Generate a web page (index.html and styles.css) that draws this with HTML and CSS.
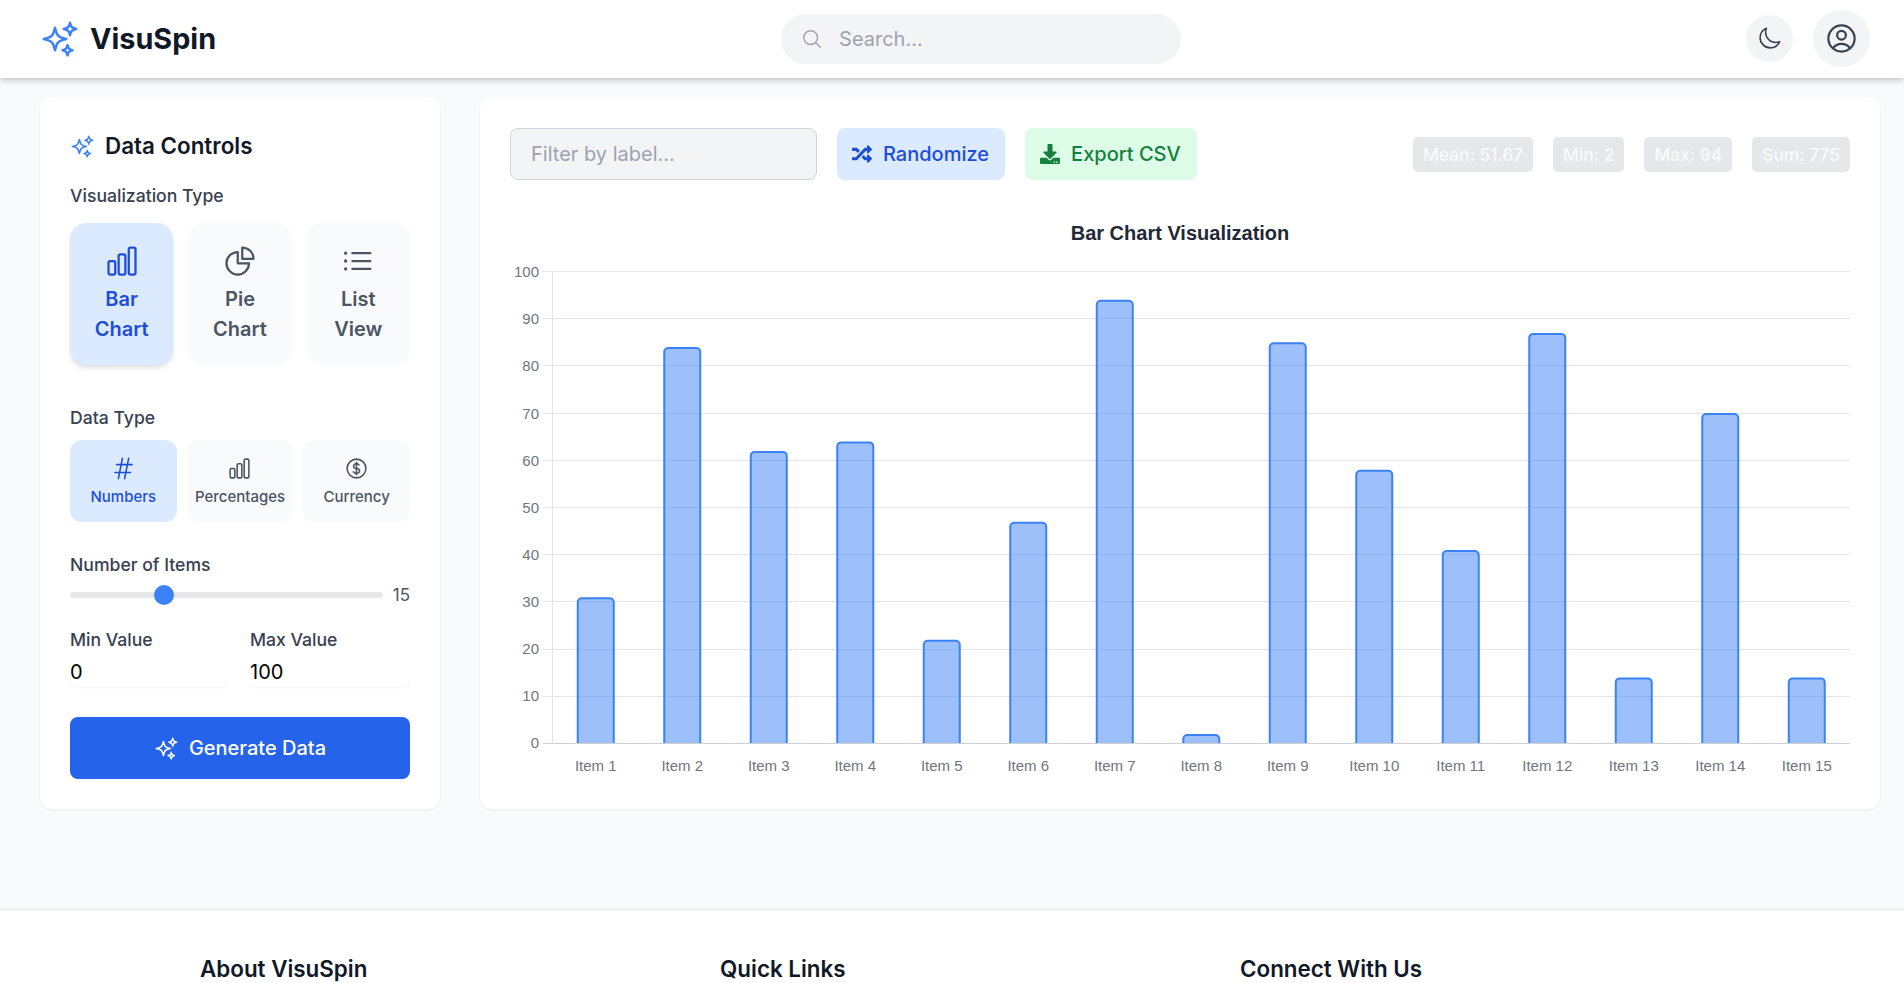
FILE: index.html
```html
<!DOCTYPE html>
<html lang="en">
<head>
  <meta charset="UTF-8">
  <meta name="viewport" content="width=device-width, initial-scale=1.0">
  <title>VisuSpin</title>
  <link rel="stylesheet" href="styles.css">
</head>
<body>
  <header class="site-header">
    <div class="brand">
      <svg class="icon brand-icon" viewBox="0 0 24 24"><path d="M9.813 15.904 9 18.75l-.813-2.846a4.5 4.5 0 0 0-3.09-3.09L2.25 12l2.846-.813a4.5 4.5 0 0 0 3.09-3.09L9 5.25l.813 2.846a4.5 4.5 0 0 0 3.09 3.09L15.75 12l-2.846.813a4.5 4.5 0 0 0-3.09 3.09ZM18.259 8.715 18 9.75l-.259-1.035a3.375 3.375 0 0 0-2.455-2.456L14.25 6l1.036-.259a3.375 3.375 0 0 0 2.455-2.456L18 2.25l.259 1.035a3.375 3.375 0 0 0 2.456 2.456L21.75 6l-1.035.259a3.375 3.375 0 0 0-2.456 2.456ZM16.894 20.567 16.5 21.75l-.394-1.183a2.25 2.25 0 0 0-1.423-1.423L13.5 18.75l1.183-.394a2.25 2.25 0 0 0 1.423-1.423l.394-1.183.394 1.183a2.25 2.25 0 0 0 1.423 1.423l1.183.394-1.183.394a2.25 2.25 0 0 0-1.423 1.423Z"/></svg>
      <span class="brand-name">VisuSpin</span>
    </div>
    <label class="search">
      <svg class="icon search-icon" viewBox="0 0 24 24"><path d="m21 21-5.197-5.197m0 0A7.5 7.5 0 1 0 5.196 5.196a7.5 7.5 0 0 0 10.607 10.607Z"/></svg>
      <input type="text" placeholder="Search...">
    </label>
    <div class="header-actions">
      <button class="round-btn" type="button">
        <svg class="icon moon-icon" viewBox="0 0 24 24"><path d="M21.752 15.002A9.72 9.72 0 0 1 18 15.75c-5.385 0-9.75-4.365-9.75-9.75 0-1.33.266-2.597.748-3.752A9.753 9.753 0 0 0 3 11.25C3 16.635 7.365 21 12.75 21a9.753 9.753 0 0 0 9.002-5.998Z"/></svg>
      </button>
      <button class="round-btn" type="button">
        <svg class="icon user-icon" viewBox="0 0 24 24"><path d="M17.982 18.725A7.488 7.488 0 0 0 12 15.75a7.488 7.488 0 0 0-5.982 2.975m11.963 0a9 9 0 1 0-11.963 0m11.963 0A8.966 8.966 0 0 1 12 21a8.966 8.966 0 0 1-5.982-2.275M15 9.75a3 3 0 1 1-6 0 3 3 0 0 1 6 0Z"/></svg>
      </button>
    </div>
  </header>

  <main class="dashboard">
    <aside class="card controls">
      <h2 class="controls-title">
        <svg class="icon title-icon" viewBox="0 0 24 24"><path d="M9.813 15.904 9 18.75l-.813-2.846a4.5 4.5 0 0 0-3.09-3.09L2.25 12l2.846-.813a4.5 4.5 0 0 0 3.09-3.09L9 5.25l.813 2.846a4.5 4.5 0 0 0 3.09 3.09L15.75 12l-2.846.813a4.5 4.5 0 0 0-3.09 3.09ZM18.259 8.715 18 9.75l-.259-1.035a3.375 3.375 0 0 0-2.455-2.456L14.25 6l1.036-.259a3.375 3.375 0 0 0 2.455-2.456L18 2.25l.259 1.035a3.375 3.375 0 0 0 2.456 2.456L21.75 6l-1.035.259a3.375 3.375 0 0 0-2.456 2.456ZM16.894 20.567 16.5 21.75l-.394-1.183a2.25 2.25 0 0 0-1.423-1.423L13.5 18.75l1.183-.394a2.25 2.25 0 0 0 1.423-1.423l.394-1.183.394 1.183a2.25 2.25 0 0 0 1.423 1.423l1.183.394-1.183.394a2.25 2.25 0 0 0-1.423 1.423Z"/></svg>
        Data Controls
      </h2>

      <div class="field-label viz-label">Visualization Type</div>
      <div class="viz-options">
        <button class="viz-btn active" type="button">
          <svg class="icon" viewBox="0 0 24 24"><path d="M3 13.125C3 12.504 3.504 12 4.125 12h2.25c.621 0 1.125.504 1.125 1.125v6.75C7.5 20.496 6.996 21 6.375 21h-2.25A1.125 1.125 0 0 1 3 19.875v-6.75ZM9.750 8.625c0-.621.504-1.125 1.125-1.125h2.25c.621 0 1.125.504 1.125 1.125v11.25c0 .621-.504 1.125-1.125 1.125h-2.25a1.125 1.125 0 0 1-1.125-1.125V8.625ZM16.5 4.125c0-.621.504-1.125 1.125-1.125h2.25C20.496 3 21 3.504 21 4.125v15.75c0 .621-.504 1.125-1.125 1.125h-2.25a1.125 1.125 0 0 1-1.125-1.125V4.125Z"/></svg>
          <span>Bar Chart</span>
        </button>
        <button class="viz-btn" type="button">
          <svg class="icon" viewBox="0 0 24 24"><path d="M10.5 6a7.5 7.5 0 1 0 7.5 7.5h-7.5V6Z"/><path d="M13.5 10.5H21A7.5 7.5 0 0 0 13.5 3v7.5Z"/></svg>
          <span>Pie Chart</span>
        </button>
        <button class="viz-btn" type="button">
          <svg class="icon" viewBox="0 0 24 24"><path d="M8.25 6.75h12M8.25 12h12m-12 5.25h12M3.75 6.75h.007v.008H3.75V6.75Zm.375 0a.375.375 0 1 1-.75 0 .375.375 0 0 1 .75 0ZM3.75 12h.007v.008H3.75V12Zm.375 0a.375.375 0 1 1-.75 0 .375.375 0 0 1 .75 0Zm-.375 5.25h.007v.008H3.75v-.008Zm.375 0a.375.375 0 1 1-.75 0 .375.375 0 0 1 .75 0Z"/></svg>
          <span>List View</span>
        </button>
      </div>

      <div class="field-label type-label">Data Type</div>
      <div class="type-options">
        <button class="type-btn active" type="button">
          <svg class="icon" viewBox="0 0 24 24"><path d="M5.25 8.25h15m-16.5 7.5h15m-1.8-13.5-3.9 19.5m-2.1-19.5-3.9 19.5"/></svg>
          <span>Numbers</span>
        </button>
        <button class="type-btn" type="button">
          <svg class="icon" viewBox="0 0 24 24"><path d="M3 13.125C3 12.504 3.504 12 4.125 12h2.25c.621 0 1.125.504 1.125 1.125v6.75C7.5 20.496 6.996 21 6.375 21h-2.25A1.125 1.125 0 0 1 3 19.875v-6.75ZM9.750 8.625c0-.621.504-1.125 1.125-1.125h2.25c.621 0 1.125.504 1.125 1.125v11.25c0 .621-.504 1.125-1.125 1.125h-2.25a1.125 1.125 0 0 1-1.125-1.125V8.625ZM16.5 4.125c0-.621.504-1.125 1.125-1.125h2.25C20.496 3 21 3.504 21 4.125v15.75c0 .621-.504 1.125-1.125 1.125h-2.25a1.125 1.125 0 0 1-1.125-1.125V4.125Z"/></svg>
          <span>Percentages</span>
        </button>
        <button class="type-btn" type="button">
          <svg class="icon" viewBox="0 0 24 24"><path d="M12 6v12m-3-2.818.879.659c1.171.879 3.07.879 4.242 0 1.172-.879 1.172-2.303 0-3.182C13.536 12.219 12.768 12 12 12c-.725 0-1.45-.22-2.003-.659-1.106-.879-1.106-2.303 0-3.182s2.9-.879 4.006 0l.415.33M21 12a9 9 0 1 1-18 0 9 9 0 0 1 18 0Z"/></svg>
          <span>Currency</span>
        </button>
      </div>

      <div class="field-label items-label">Number of Items</div>
      <div class="slider-row">
        <input class="slider" type="range" min="5" max="40" value="15">
        <span class="slider-value">15</span>
      </div>

      <div class="range-fields">
        <div class="range-field">
          <label class="field-label" for="minValue">Min Value</label>
          <input id="minValue" type="number" value="0">
        </div>
        <div class="range-field">
          <label class="field-label" for="maxValue">Max Value</label>
          <input id="maxValue" type="number" value="100">
        </div>
      </div>

      <button class="generate-btn" type="button">
        <svg class="icon" viewBox="0 0 24 24"><path d="M9.813 15.904 9 18.75l-.813-2.846a4.5 4.5 0 0 0-3.09-3.09L2.25 12l2.846-.813a4.5 4.5 0 0 0 3.09-3.09L9 5.25l.813 2.846a4.5 4.5 0 0 0 3.09 3.09L15.75 12l-2.846.813a4.5 4.5 0 0 0-3.09 3.09ZM18.259 8.715 18 9.75l-.259-1.035a3.375 3.375 0 0 0-2.455-2.456L14.25 6l1.036-.259a3.375 3.375 0 0 0 2.455-2.456L18 2.25l.259 1.035a3.375 3.375 0 0 0 2.456 2.456L21.75 6l-1.035.259a3.375 3.375 0 0 0-2.456 2.456ZM16.894 20.567 16.5 21.750l-.394-1.183a2.25 2.25 0 0 0-1.423-1.423L13.5 18.75l1.183-.394a2.25 2.25 0 0 0 1.423-1.423l.394-1.183.394 1.183a2.25 2.25 0 0 0 1.423 1.423l1.183.394-1.183.394a2.25 2.25 0 0 0-1.423 1.423Z"/></svg>
        Generate Data
      </button>
    </aside>

    <section class="card chart-panel">
      <div class="toolbar">
        <input class="filter-input" type="text" placeholder="Filter by label...">
        <button class="tool-btn randomize" type="button">
          <svg viewBox="0 0 512 512"><path d="M504.971 359.029c9.373 9.373 9.373 24.569 0 33.941l-80 79.984c-15.01 15.01-40.971 4.49-40.971-16.971V416h-58.785a12.004 12.004 0 0 1-8.773-3.812l-70.556-75.596 53.333-57.143L352 336h32v-39.981c0-21.438 25.943-31.998 40.971-16.971l80 79.981zM12 176h84l52.781 56.551 53.333-57.143-70.556-75.596A11.999 11.999 0 0 0 122.785 96H12c-6.627 0-12 5.373-12 12v56c0 6.627 5.373 12 12 12zm372 0v39.984c0 21.46 25.961 31.98 40.971 16.971l80-79.984c9.373-9.373 9.373-24.569 0-33.941l-80-79.981C409.943 24.021 384 34.582 384 56.019V96h-58.785a12.004 12.004 0 0 0-8.773 3.812L96 336H12c-6.627 0-12 5.373-12 12v56c0 6.627 5.373 12 12 12h110.785c3.326 0 6.503-1.381 8.773-3.812L352 176h32z"/></svg>
          Randomize
        </button>
        <button class="tool-btn export" type="button">
          <svg viewBox="0 0 512 512"><path d="M216 0h80c13.3 0 24 10.7 24 24v168h87.7c17.8 0 26.7 21.5 14.1 34.1L269.7 378.3c-7.5 7.5-19.8 7.5-27.3 0L90.1 226.1c-12.6-12.6-3.7-34.1 14.1-34.1H192V24c0-13.3 10.7-24 24-24zm296 376v112c0 13.3-10.7 24-24 24H24c-13.3 0-24-10.7-24-24V376c0-13.3 10.7-24 24-24h146.7l49 49c20.1 20.1 52.5 20.1 72.6 0l49-49H488c13.3 0 24 10.7 24 24zm-124 88c0-11-9-20-20-20s-20 9-20 20 9 20 20 20 20-9 20-20zm64 0c0-11-9-20-20-20s-20 9-20 20 9 20 20 20 20-9 20-20z"/></svg>
          Export CSV
        </button>
        <div class="stats">
          <span class="stat">Mean: 51.67</span>
          <span class="stat">Min: 2</span>
          <span class="stat">Max: 94</span>
          <span class="stat">Sum: 775</span>
        </div>
      </div>

      <svg class="chart" viewBox="0 0 1340 569" width="1340" height="569">
        <text class="chart-title" x="670" y="30" text-anchor="middle">Bar Chart Visualization</text>
        <g class="grid">
          <path d="M33 61.500H1340M33 108.500H1340M33 155.500H1340M33 203.500H1340M33 250.500H1340M33 297.500H1340M33 344.500H1340M33 391.500H1340M33 439.500H1340M33 486.500H1340"/>
          <path d="M42.500 61.500V533"/>
        </g>
        <path class="axis" d="M33 533.500H1340"/>
        <g class="y-labels" text-anchor="end">
          <text x="29" y="66.500">100</text>
          <text x="29" y="113.500">90</text>
          <text x="29" y="160.500">80</text>
          <text x="29" y="208.500">70</text>
          <text x="29" y="255.500">60</text>
          <text x="29" y="302.500">50</text>
          <text x="29" y="349.500">40</text>
          <text x="29" y="396.500">30</text>
          <text x="29" y="444">20</text>
          <text x="29" y="491">10</text>
          <text x="29" y="538">0</text>
        </g>
        <g class="bars">
          <path d="M67.750 533V392.200a4 4 0 0 1 4-4h28a4 4 0 0 1 4 4V533"/>
          <path d="M154.250 533V142a4 4 0 0 1 4-4h28a4 4 0 0 1 4 4V533"/>
          <path d="M240.750 533V245.900a4 4 0 0 1 4-4h28a4 4 0 0 1 4 4V533"/>
          <path d="M327.250 533V236.400a4 4 0 0 1 4-4h28a4 4 0 0 1 4 4V533"/>
          <path d="M413.750 533V434.700a4 4 0 0 1 4-4h28a4 4 0 0 1 4 4V533"/>
          <path d="M500.250 533V316.700a4 4 0 0 1 4-4h28a4 4 0 0 1 4 4V533"/>
          <path d="M586.750 533V94.800a4 4 0 0 1 4-4h28a4 4 0 0 1 4 4V533"/>
          <path d="M673.250 533V529.100a4 4 0 0 1 4-4h28a4 4 0 0 1 4 4V533"/>
          <path d="M759.750 533V137.300a4 4 0 0 1 4-4h28a4 4 0 0 1 4 4V533"/>
          <path d="M846.250 533V264.700a4 4 0 0 1 4-4h28a4 4 0 0 1 4 4V533"/>
          <path d="M932.750 533V345a4 4 0 0 1 4-4h28a4 4 0 0 1 4 4V533"/>
          <path d="M1019.250 533V127.900a4 4 0 0 1 4-4h28a4 4 0 0 1 4 4V533"/>
          <path d="M1105.750 533V472.400a4 4 0 0 1 4-4h28a4 4 0 0 1 4 4V533"/>
          <path d="M1192.250 533V208.100a4 4 0 0 1 4-4h28a4 4 0 0 1 4 4V533"/>
          <path d="M1278.750 533V472.400a4 4 0 0 1 4-4h28a4 4 0 0 1 4 4V533"/>
        </g>
        <g class="x-labels" text-anchor="middle">
          <text x="85.750" y="560.500">Item 1</text>
          <text x="172.250" y="560.500">Item 2</text>
          <text x="258.750" y="560.500">Item 3</text>
          <text x="345.250" y="560.500">Item 4</text>
          <text x="431.750" y="560.500">Item 5</text>
          <text x="518.250" y="560.500">Item 6</text>
          <text x="604.750" y="560.500">Item 7</text>
          <text x="691.250" y="560.500">Item 8</text>
          <text x="777.750" y="560.500">Item 9</text>
          <text x="864.250" y="560.500">Item 10</text>
          <text x="950.750" y="560.500">Item 11</text>
          <text x="1037.250" y="560.500">Item 12</text>
          <text x="1123.750" y="560.500">Item 13</text>
          <text x="1210.250" y="560.500">Item 14</text>
          <text x="1296.750" y="560.500">Item 15</text>
        </g>
      </svg>
    </section>
  </main>

  <footer class="site-footer">
    <div class="footer-col"><h3>About VisuSpin</h3></div>
    <div class="footer-col"><h3>Quick Links</h3></div>
    <div class="footer-col"><h3>Connect With Us</h3></div>
  </footer>
</body>
</html>
```

FILE: styles.css
```css
* {
  box-sizing: border-box;
}
html, body {
  height: 100%;
}
body {
  font-family: Inter, "Noto Sans", sans-serif;
  background-color: #f9fafb;
  color: #111827;
  margin: 0;
  overflow: hidden;
}
button, input {
  font-family: inherit;
}
button {
  border: none;
  cursor: pointer;
}
.icon {
  fill: none;
  stroke: currentColor;
  stroke-width: 1.5;
  stroke-linecap: round;
  stroke-linejoin: round;
  flex-shrink: 0;
}

/* header */
.site-header {
  display: flex;
  justify-content: space-between;
  align-items: center;
  height: 78px;
  padding: 0 34px 1px 40px;
  background: white;
  box-shadow: 0 4px 6px -1px rgba(0,0,0,0.15), 0 2px 4px -1px rgba(0,0,0,0.1);
  position: relative;
}
.brand {
  display: flex;
  align-items: center;
  gap: 10px;
}
.brand-icon {
  width: 40px;
  height: 40px;
  color: #3b82f6;
}
.brand-name {
  font-size: 28.8px;
  font-weight: 700;
  color: #111827;
}
.search {
  display: flex;
  align-items: center;
  gap: 16px;
  width: 400px;
  height: 50px;
  padding: 0 20px;
  border-radius: 25px;
  background: #f3f4f6;
}
.search-icon {
  width: 22px;
  height: 22px;
  color: #9ca3af;
}
.search input {
  flex: 1;
  min-width: 0;
  padding: 0;
  border: none;
  outline: none;
  background: transparent;
  font-size: 20px;
}
input::placeholder {
  color: #9ca3af;
  opacity: 1;
}
.header-actions {
  display: flex;
  align-items: center;
  gap: 20px;
}
.round-btn {
  display: flex;
  padding: 11px;
  border-radius: 50%;
  background: #f3f4f6;
  color: #374151;
}
.moon-icon {
  width: 25px;
  height: 25px;
}
.user-icon {
  width: 35px;
  height: 35px;
}

/* layout */
.dashboard {
  display: grid;
  grid-template-columns: 400px 1fr;
  gap: 40px;
  padding: 20px 24px 100px 40px;
}
.card {
  background: white;
  border-radius: 12px;
  box-shadow: 0 1px 3px rgba(0,0,0,0.05);
  padding: 30px;
  height: 711px;
}

/* left controls */
.controls-title {
  display: flex;
  align-items: center;
  gap: 10px;
  margin: 0;
  font-size: 22.4px;
  font-weight: 600;
  line-height: 36px;
}
.title-icon {
  width: 25px;
  height: 25px;
  color: #3b82f6;
}
.field-label {
  display: block;
  font-size: 17.6px;
  font-weight: 500;
  line-height: 26px;
  color: #374151;
}
.viz-label {
  margin-top: 19px;
  margin-bottom: 14px;
}
.viz-options {
  display: grid;
  grid-template-columns: repeat(3, 1fr);
  gap: 15px;
}
.viz-btn {
  display: flex;
  flex-direction: column;
  align-items: center;
  gap: 5px;
  height: 142px;
  padding: 20px 14px;
  border-radius: 16px;
  background: #f9fafb;
  color: #4b5563;
  font-size: 20px;
  font-weight: 600;
  line-height: 30px;
}
.viz-btn .icon {
  width: 36px;
  height: 36px;
}
.viz-btn.active, .type-btn.active {
  background: #dbeafe;
  color: #1d4ed8;
}
.viz-btn.active {
  box-shadow: 0 4px 6px -1px rgba(0,0,0,0.1), 0 2px 4px -2px rgba(0,0,0,0.1);
}
.type-label {
  margin-top: 40px;
  margin-bottom: 9px;
}
.type-options {
  display: grid;
  grid-template-columns: repeat(3, 1fr);
  gap: 10px;
}
.type-btn {
  display: flex;
  flex-direction: column;
  align-items: center;
  gap: 5px;
  height: 82px;
  padding: 16px 0 0;
  border-radius: 12px;
  background: #f9fafb;
  color: #4b5563;
  font-size: 15px;
  font-weight: 500;
  line-height: 22px;
}
.type-btn .icon {
  width: 25px;
  height: 25px;
}
.items-label {
  margin-top: 30px;
}
.slider-row {
  display: flex;
  align-items: center;
  gap: 10px;
  margin-top: 4px;
}
.slider {
  flex: 1;
  min-width: 0;
  height: 20px;
  margin: 0;
  background: transparent;
  -webkit-appearance: none;
  appearance: none;
}
.slider::-webkit-slider-runnable-track {
  height: 6px;
  border-radius: 3px;
  background: #e5e7eb;
}
.slider::-webkit-slider-thumb {
  -webkit-appearance: none;
  width: 20px;
  height: 20px;
  margin-top: -7px;
  border-radius: 50%;
  background: #3b82f6;
}
.slider-value {
  font-size: 17px;
  line-height: 26px;
  color: #4b5563;
}
.range-fields {
  display: grid;
  grid-template-columns: 1fr 1fr;
  gap: 20px;
  margin-top: 19px;
}
.range-field input {
  display: block;
  width: 100%;
  height: 30px;
  margin-top: 4px;
  padding: 0;
  border: none;
  outline: none;
  border-radius: 8px;
  background: white;
  box-shadow: 0 1px 2px rgba(0,0,0,0.05);
  font-size: 20px;
  color: #000;
}
.range-field input::-webkit-inner-spin-button {
  -webkit-appearance: none;
}
.generate-btn {
  display: flex;
  justify-content: center;
  align-items: center;
  gap: 10px;
  width: 100%;
  height: 62px;
  margin-top: 30px;
  border-radius: 8px;
  background: #2563eb;
  color: white;
  font-size: 20px;
  font-weight: 500;
}
.generate-btn .icon {
  width: 25px;
  height: 25px;
}

/* chart panel */
.toolbar {
  display: flex;
  align-items: center;
  gap: 20px;
}
.filter-input {
  width: 307px;
  height: 52px;
  padding: 0 20px;
  border: 1px solid #d1d5db;
  border-radius: 8px;
  outline: none;
  background: #f3f4f6;
  font-size: 20px;
}
.tool-btn {
  display: flex;
  align-items: center;
  gap: 11px;
  height: 52px;
  padding: 0 16px 0 15px;
  border-radius: 8px;
  font-size: 20px;
  font-weight: 500;
}
.tool-btn svg {
  width: 20px;
  height: 20px;
  fill: currentColor;
}
.randomize {
  background: #dbeafe;
  color: #1d4ed8;
}
.export {
  background: #dcfce7;
  color: #15803d;
}
.stats {
  display: flex;
  gap: 20px;
  margin-left: auto;
}
.stat {
  padding: 0 10px;
  border-radius: 5px;
  background: #e5e7eb;
  color: #f9fafb;
  font-size: 17.4px;
  font-weight: 500;
  line-height: 35px;
}
.chart {
  display: block;
  margin-top: 30px;
}
.chart text {
  font-family: "Liberation Sans", Arial, sans-serif;
  font-size: 15px;
  fill: #6f7580;
}
.chart .chart-title {
  font-size: 20px;
  font-weight: 700;
  fill: #1f2937;
}
.grid {
  fill: none;
  stroke: #e2e4e8;
  stroke-width: 1;
}
.axis {
  fill: none;
  stroke: #cfd1d6;
  stroke-width: 1;
}
.bars path {
  fill: rgba(59,130,246,0.5);
  stroke: #3b82f6;
  stroke-width: 2;
}

/* footer */
.site-footer {
  display: grid;
  grid-template-columns: repeat(3, 480px);
  column-gap: 40px;
  height: 74px;
  padding: 43px 0 0 200px;
  background: white;
  border-top: 1px solid #e5e7eb;
}
.footer-col h3 {
  margin: 0;
  font-size: 22.4px;
  font-weight: 600;
  line-height: 32px;
  color: #111827;
}
```
